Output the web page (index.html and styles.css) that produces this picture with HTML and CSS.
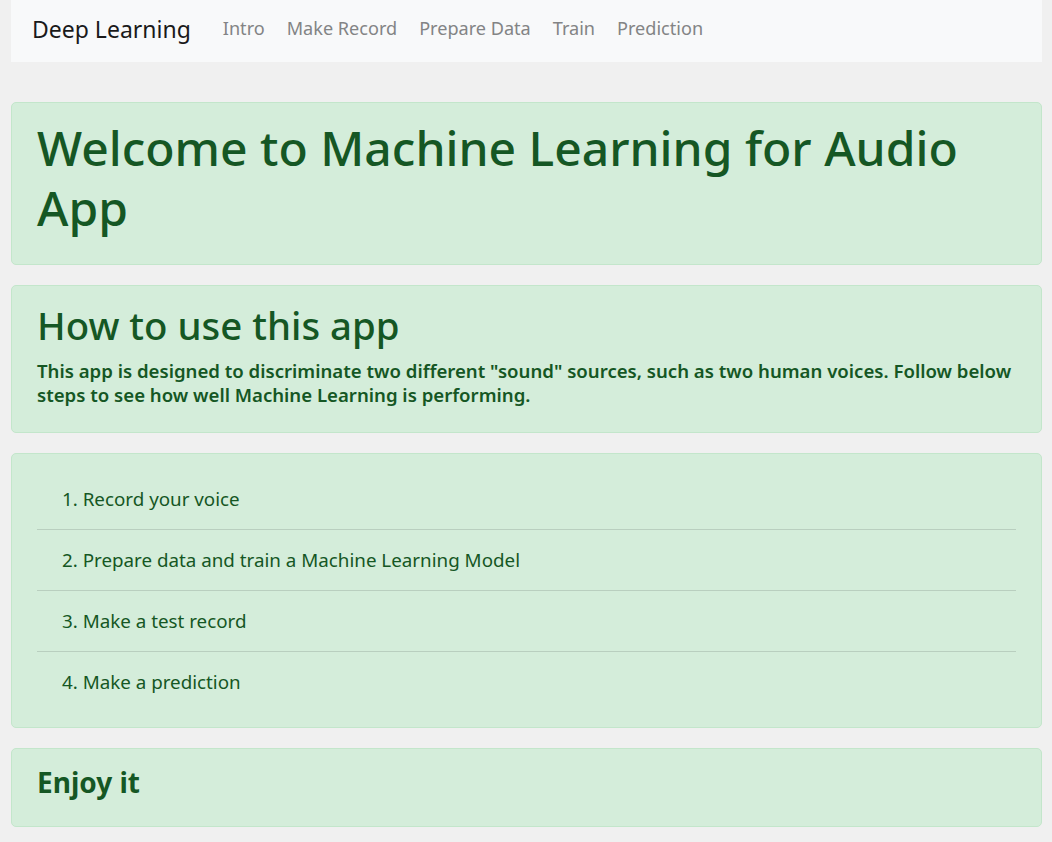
FILE: index.html
```html
<!DOCTYPE html>
<html lang="en">
<head>
<meta charset="utf-8">
<title>Deep Learning</title>
<link rel="stylesheet" href="styles.css">
</head>
<body>
<div class="page">
  <nav class="navbar">
    <a class="brand" href="#">Deep Learning</a>
    <ul class="nav">
      <li><a href="#">Intro</a></li>
      <li><a href="#">Make Record</a></li>
      <li><a href="#">Prepare Data</a></li>
      <li><a href="#">Train</a></li>
      <li><a href="#">Prediction</a></li>
    </ul>
  </nav>
  <main class="content">
    <section class="alert">
      <h1 class="title">Welcome to Machine Learning for Audio App</h1>
    </section>
    <section class="alert">
      <h2 class="subtitle">How to use this app</h2>
      <p class="lead">This app is designed to discriminate two different "sound" sources, such as two human voices. Follow below steps to see how well Machine Learning is performing.</p>
    </section>
    <section class="alert">
      <ul class="steps">
        <li>1. Record your voice</li>
        <li>2. Prepare data and train a Machine Learning Model</li>
        <li>3. Make a test record</li>
        <li>4. Make a prediction</li>
      </ul>
    </section>
    <section class="alert">
      <h4 class="closing">Enjoy it</h4>
    </section>
  </main>
</div>
</body>
</html>
```

FILE: styles.css
```css
* { box-sizing: border-box; }
html, body { margin: 0; padding: 0; }
body {
  background: #f0f0f0;
  font-family: "Noto Sans", "Open Sans", sans-serif;
  color: #155724;
}
.page {
  margin: 0 10px 0 11px;
}
.navbar {
  height: 62px;
  background: #f8f9fa;
  display: flex;
  align-items: center;
  padding: 0 21px;
}
.brand {
  font-size: 23px;
  color: #1a1a1a;
  text-decoration: none;
  margin-right: 21px;
  margin-top: -5px;
}
.nav {
  list-style: none;
  margin: 0;
  padding: 0;
  display: flex;
}
.nav a {
  display: block;
  padding: 0 11px;
  font-size: 18.1px;
  color: #838485;
  text-decoration: none;
  margin-top: -7px;
}
.content {
  padding-top: 40px;
  display: flex;
  flex-direction: column;
  gap: 20px;
}
.alert {
  background: #d4edda;
  border: 1px solid #c3e6cb;
  border-radius: 5px;
  padding: 15px 25px;
  color: #155724;
}
.title {
  margin: 0 0 11px;
  font-size: 48px;
  line-height: 60px;
  font-weight: 500;
}
.subtitle {
  margin: 0 0 10px;
  font-size: 38.4px;
  line-height: 48px;
  font-weight: 500;
}
.lead {
  margin: 0 0 10px;
  font-size: 18.6px;
  line-height: 24px;
  font-weight: 600;
}
.steps {
  list-style: none;
  margin: 0;
  padding: 0;
}
.steps li {
  padding: 15px 25px;
  font-size: 18.8px;
  line-height: 30px;
  border-top: 1px solid #b9cfbf;
}
.steps li:first-child { border-top: 0; }
.closing {
  margin: 0 0 11px;
  font-size: 28px;
  line-height: 36px;
  font-weight: 700;
}
```
